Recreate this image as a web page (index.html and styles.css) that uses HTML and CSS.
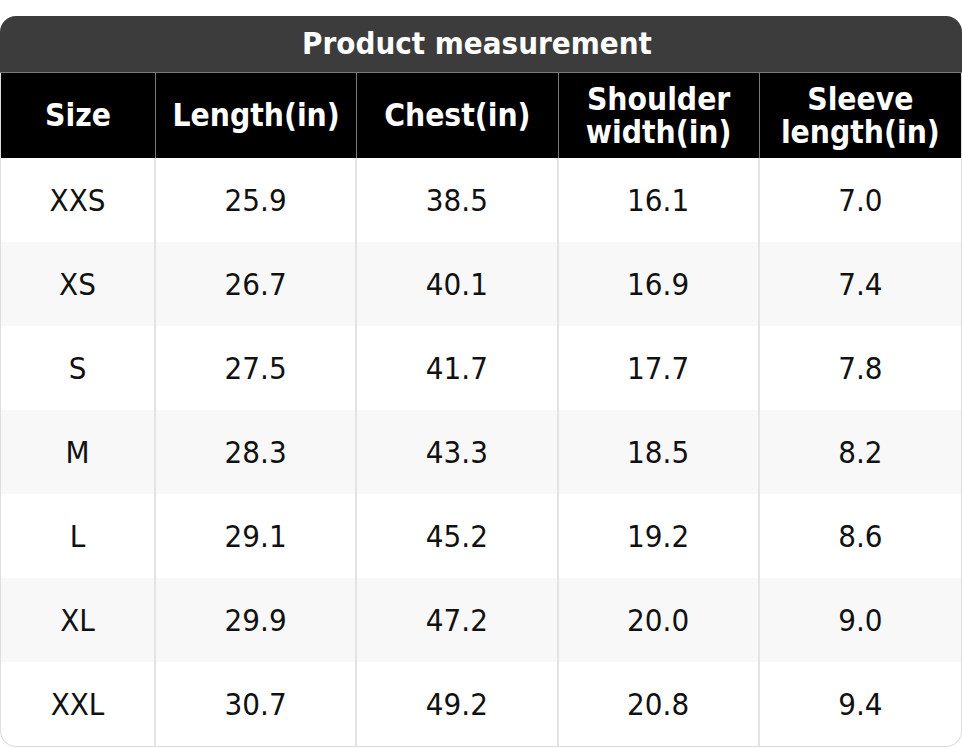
FILE: index.html
```html
<!DOCTYPE html>
<html lang="en">
<head>
<meta charset="utf-8">
<title>Product measurement</title>
<link rel="stylesheet" href="styles.css">
</head>
<body>
<div class="card">
  <div class="title">Product measurement</div>
  <table class="chart">
    <colgroup>
      <col class="col-size">
      <col>
      <col>
      <col>
      <col>
    </colgroup>
    <thead>
      <tr>
        <th>Size</th>
        <th>Length(in)</th>
        <th>Chest(in)</th>
        <th>Shoulder<br>width(in)</th>
        <th>Sleeve<br>length(in)</th>
      </tr>
    </thead>
    <tbody>
      <tr><td>XXS</td><td>25.9</td><td>38.5</td><td>16.1</td><td>7.0</td></tr>
      <tr><td>XS</td><td>26.7</td><td>40.1</td><td>16.9</td><td>7.4</td></tr>
      <tr><td>S</td><td>27.5</td><td>41.7</td><td>17.7</td><td>7.8</td></tr>
      <tr><td>M</td><td>28.3</td><td>43.3</td><td>18.5</td><td>8.2</td></tr>
      <tr><td>L</td><td>29.1</td><td>45.2</td><td>19.2</td><td>8.6</td></tr>
      <tr><td>XL</td><td>29.9</td><td>47.2</td><td>20.0</td><td>9.0</td></tr>
      <tr><td>XXL</td><td>30.7</td><td>49.2</td><td>20.8</td><td>9.4</td></tr>
    </tbody>
  </table>
</div>
</body>
</html>
```
FILE: styles.css
```css
html, body {
  margin: 0;
  padding: 0;
  background: #ffffff;
}

body {
  padding-top: 16px;
  font-family: "DejaVu Sans Condensed", "DejaVu Sans", sans-serif;
  font-stretch: condensed;
  color: #111111;
}

.card {
  width: 962px;
}

.title {
  height: 56px;
  line-height: 55px;
  background: #3c3c3c;
  color: #ffffff;
  font-weight: bold;
  font-size: 31px;
  text-align: center;
  border-radius: 16px 16px 0 0;
  border-bottom: 1px solid #7a7a7a;
  padding-right: 8px;
}

.chart {
  width: 962px;
  table-layout: fixed;
  border-collapse: separate;
  border-spacing: 0;
  border: 1px solid #dddddd;
  border-top: 0;
  border-radius: 0 0 16px 16px;
  overflow: hidden;
}

.col-size {
  width: 155px;
}

.chart th {
  height: 85px;
  padding: 0;
  background: #000000;
  color: #ffffff;
  font-weight: bold;
  font-size: 31.5px;
  line-height: 33px;
  text-align: center;
  vertical-align: middle;
  border-right: 1px solid #7a7a7a;
}

.chart th:last-child {
  border-right: 0;
}

.chart td {
  height: 84px;
  padding: 0;
  font-size: 31px;
  line-height: 34px;
  text-align: center;
  vertical-align: middle;
  border-right: 2px solid #e3e3e3;
}

.chart td:last-child {
  border-right: 0;
}

.chart tbody tr:nth-child(even) td {
  background: #f8f8f8;
}
```
